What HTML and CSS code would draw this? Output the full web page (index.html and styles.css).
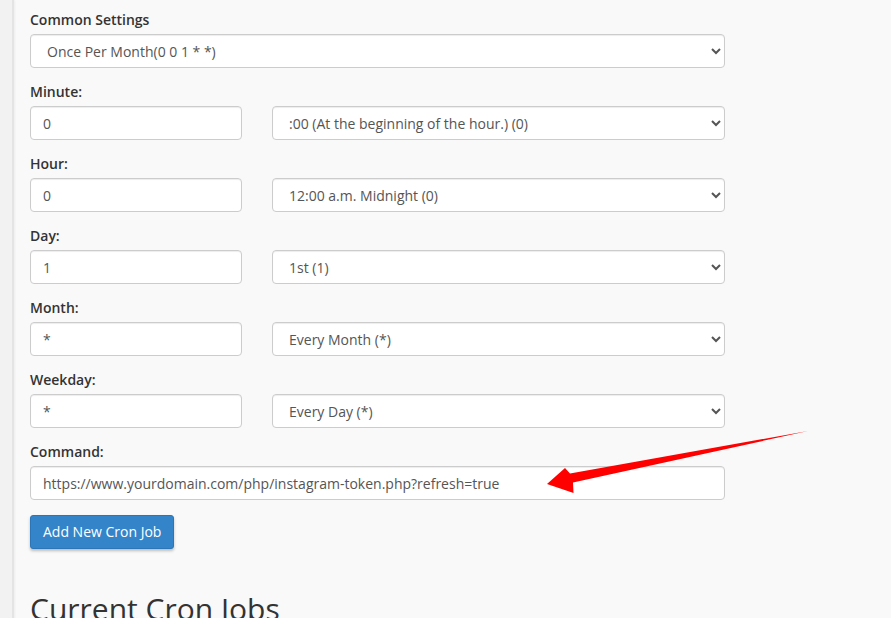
FILE: index.html
```html
<!DOCTYPE html>
<html>
<head>
<meta charset="utf-8">
<link rel="stylesheet" href="styles.css">
</head>
<body>
<div class="layout">
  <div class="sidebar"></div>
  <main class="main">
    <form class="cron-form">
      <div class="form-group">
        <label class="label">Common Settings</label>
        <select class="control">
          <option>Once Per Month(0 0 1 * *)</option>
        </select>
      </div>
      <div class="form-group">
        <label class="label">Minute:</label>
        <div class="pair">
          <input class="control" type="text" value="0">
          <select class="control"><option>:00 (At the beginning of the hour.) (0)</option></select>
        </div>
      </div>
      <div class="form-group">
        <label class="label">Hour:</label>
        <div class="pair">
          <input class="control" type="text" value="0">
          <select class="control"><option>12:00 a.m. Midnight (0)</option></select>
        </div>
      </div>
      <div class="form-group">
        <label class="label">Day:</label>
        <div class="pair">
          <input class="control" type="text" value="1">
          <select class="control"><option>1st (1)</option></select>
        </div>
      </div>
      <div class="form-group">
        <label class="label">Month:</label>
        <div class="pair">
          <input class="control" type="text" value="*">
          <select class="control"><option>Every Month (*)</option></select>
        </div>
      </div>
      <div class="form-group">
        <label class="label">Weekday:</label>
        <div class="pair">
          <input class="control" type="text" value="*">
          <select class="control"><option>Every Day (*)</option></select>
        </div>
      </div>
      <div class="form-group">
        <label class="label">Command:</label>
        <input class="control" type="text" value="https://www.yourdomain.com/php/instagram-token.php?refresh=true">
      </div>
      <button type="button" class="btn">Add New Cron Job</button>
    </form>
    <h2 class="heading">Current Cron Jobs</h2>
  </main>
</div>
<svg class="annotation" width="891" height="618" viewBox="0 0 891 618">
  <polygon fill="#ff0000" points="547,484 565,468 570,473.5 808,431 573,482.5 573.5,493"/>
</svg>
</body>
</html>
```

FILE: styles.css
```css
html, body {
  margin: 0;
  padding: 0;
  background: #f9f9f9;
  font-family: "Open Sans", "Liberation Sans", sans-serif;
  font-size: 14px;
  color: #333;
  overflow: hidden;
  height: 618px;
}

.layout {
  display: flex;
  min-height: 618px;
}

.sidebar {
  width: 12px;
  flex: 0 0 12px;
  background: #f2f2f2;
  border-right: 2px solid #e4e4e4;
  box-shadow: 1px 0 2px rgba(0, 0, 0, 0.05);
}

.main {
  padding: 11px 0 0 16px;
  width: 695px;
}

.form-group {
  margin-bottom: 15px;
}

.label {
  display: block;
  font-weight: 600;
  line-height: 18px;
  margin-bottom: 5px;
  color: #333;
}

.control {
  display: block;
  box-sizing: border-box;
  width: 100%;
  height: 34px;
  padding: 6px 12px;
  font-family: "Open Sans", "Liberation Sans", sans-serif;
  font-size: 14px;
  color: #555;
  background: #fff;
  border: 1px solid #ccc;
  border-radius: 4px;
  box-shadow: inset 0 1px 1px rgba(0, 0, 0, 0.075);
  margin: 0;
}

select.control {
  padding-left: 12px;
}

.pair {
  display: grid;
  grid-template-columns: 212px 1fr;
  column-gap: 30px;
}

.btn {
  display: block;
  height: 34px;
  padding: 5px 12px 7px;
  font-family: "Open Sans", "Liberation Sans", sans-serif;
  font-size: 14px;
  color: #fff;
  background: #3484ca;
  border: 1px solid #2c76b8;
  border-radius: 3px;
  box-shadow: 0 2px 3px rgba(0, 0, 0, 0.25);
  cursor: pointer;
}

.heading {
  margin: 42px 0 0 0;
  font-size: 30px;
  font-weight: 400;
  color: #333;
  line-height: 36px;
}

.annotation {
  position: absolute;
  left: 0;
  top: 0;
  pointer-events: none;
}
```
